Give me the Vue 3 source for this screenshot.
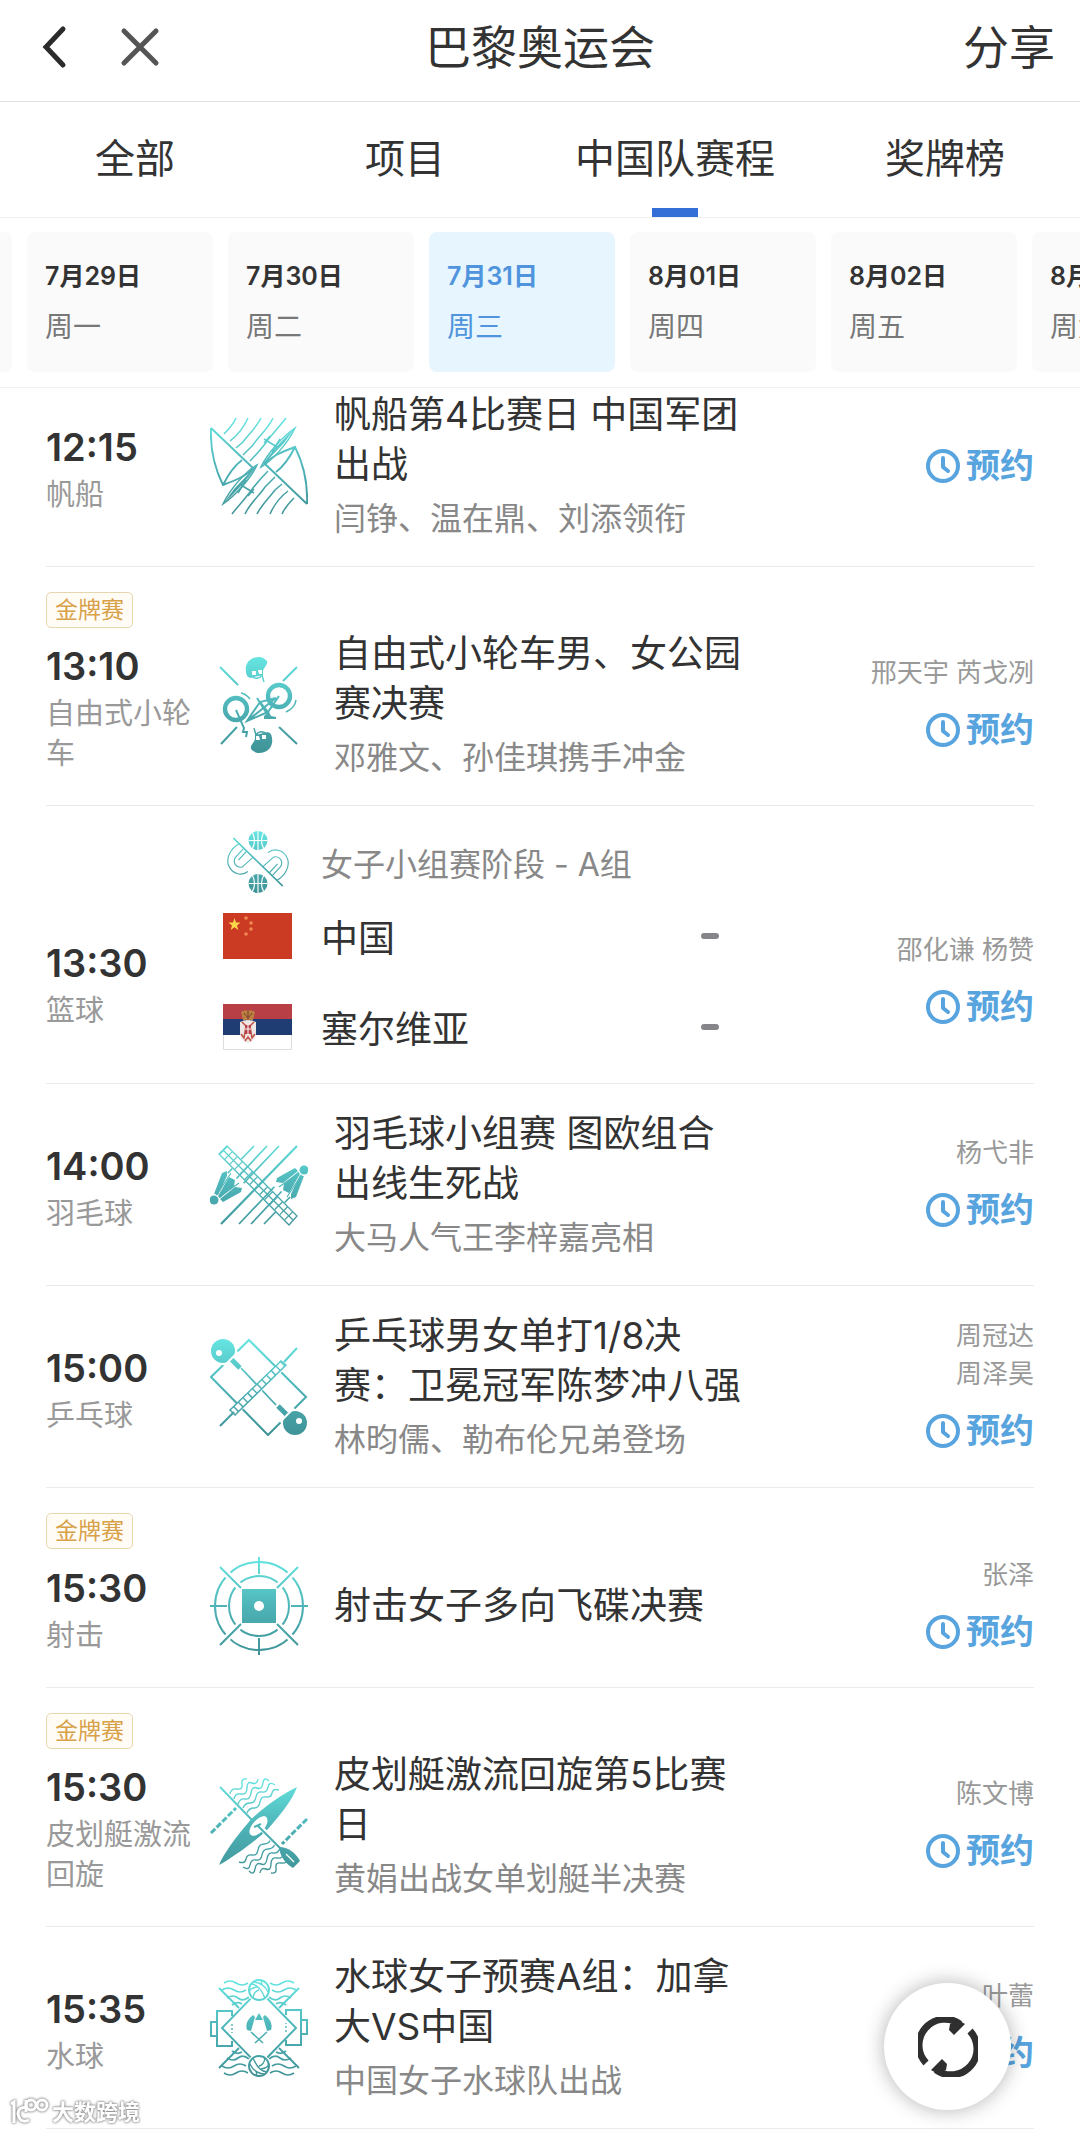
<script setup>
import { ref, onMounted } from "vue";

// 顶部标签
const tabs = ["全部", "项目", "中国队赛程", "奖牌榜"];
const activeTab = ref("中国队赛程");

// 日期
const days = [
  { date: "7月28日", week: "周日" },
  { date: "7月29日", week: "周一" },
  { date: "7月30日", week: "周二" },
  { date: "7月31日", week: "周三" },
  { date: "8月01日", week: "周四" },
  { date: "8月02日", week: "周五" },
  { date: "8月03日", week: "周六" },
];
const activeDay = ref("7月31日");
const dayBar = ref(null);
onMounted(() => {
  // 让选中的日期靠近中间
  dayBar.value.scrollLeft = 189;
});

// 赛程
const matches = ref([
  {
    time: "12:15",
    sport: "帆船",
    icon: "sail",
    title: "帆船第4比赛日 中国军团出战",
    sub: "闫铮、温在鼎、刘添领衔",
    hosts: [],
  },
  {
    gold: true,
    time: "13:10",
    sport: "自由式小轮车",
    icon: "bmx",
    title: "自由式小轮车男、女公园赛决赛",
    sub: "邓雅文、孙佳琪携手冲金",
    hosts: ["邢天宇 芮戈冽"],
  },
  {
    time: "13:30",
    sport: "篮球",
    icon: "basketball",
    stage: "女子小组赛阶段 - A组",
    teams: [
      { name: "中国", flag: "cn" },
      { name: "塞尔维亚", flag: "rs" },
    ],
    hosts: ["邵化谦 杨赞"],
  },
  {
    time: "14:00",
    sport: "羽毛球",
    icon: "badminton",
    title: "羽毛球小组赛 图欧组合出线生死战",
    sub: "大马人气王李梓嘉亮相",
    hosts: ["杨弋非"],
  },
  {
    time: "15:00",
    sport: "乒乓球",
    icon: "tabletennis",
    title: "乒乓球男女单打1/8决赛：卫冕冠军陈梦冲八强",
    sub: "林昀儒、勒布伦兄弟登场",
    hosts: ["周冠达", "周泽昊"],
  },
  {
    gold: true,
    time: "15:30",
    sport: "射击",
    icon: "shooting",
    title: "射击女子多向飞碟决赛",
    hosts: ["张泽"],
  },
  {
    gold: true,
    time: "15:30",
    sport: "皮划艇激流回旋",
    icon: "canoe",
    title: "皮划艇激流回旋第5比赛日",
    sub: "黄娟出战女单划艇半决赛",
    hosts: ["陈文博"],
  },
  {
    time: "15:35",
    sport: "水球",
    icon: "waterpolo",
    title: "水球女子预赛A组：加拿大VS中国",
    sub: "中国女子水球队出战",
    hosts: ["叶蕾"],
  },
]);

// 项目图标: w=线宽 fill=实心 cut=镂空 dash=虚线 t=变换
const turn = "rotate(180 49 49)";
const twice = (list) => [...list, ...list.map((s) => ({ ...s, t: turn }))];
const circle = (x, y, r) =>
  `M${x - r} ${y}a${r} ${r} 0 1 0 ${2 * r} 0a${r} ${r} 0 1 0 ${-2 * r} 0`;

const icons = {
  sail: twice([
    { d: "M26 1C23 8 19 12 14 17M38 1C34 10 28 18 20 24M51 1C46 11 38 18 33 25L26 31M63 1C58 12 48 20 43 28L33 38M76 1C70 9 62 17 55 27Q48 36 40 44", w: 1.5 },
    { d: "M1 11L44 52M1 11C0 34 5 52 13 68C26 63 36 59 43 52M13 68C19 56 24 49 32 43", w: 1.9 },
    { d: "M85 11C72 20 57 37 51 50C62 44 78 26 85 11Z", w: 1.5 },
    { d: "M85 11C72 23 60 36 51 50L74 26Z", fill: true },
    { d: "M54 22L67 30M60 19L54 26M62 35L70 22", w: 1.5 },
  ]),
  bmx: [
    { d: "M10 11L28 29M87 11L73 25M27 71L11 88M69 71L87 88", w: 2 },
    { d: circle(26, 53, 11), w: 4.4 },
    { d: circle(69, 40, 11), w: 4.4 },
    { d: "M31 37Q36 38 40 43M86 44Q85 52 76 56", w: 1.6 },
    { d: "M26 54L34 72L33 76L37 76L36 81M37 65L66 42L50 46L58 56L37 65L50 46M47 42L59 61M58 56L69 40", w: 2 },
    { d: "M54 60L59 56L61 60L66 61L66 63L54 63Z", fill: true },
    ...twice([
      { d: "M37 20C33 9 39 1 49 1C52 1 55 3 57 5C58 9 54 11 53 15L53 19L40 22Z", fill: true },
      { d: "M42 15h4v4h-4zM48 14h4v4h-3z", fill: true, cut: true },
      { d: "M41 20Q48 25 52 19L54 26", w: 1.4 },
    ]),
  ],
  basketball: twice([
    { d: "M10 11L88 87", w: 2 },
    { d: "M19 20C5 28 -1 42 2 53C7 68 23 72 33 64M26 28L13 42C9 50 14 59 24 57L42 41M31 32L18 46", w: 1.8 },
    { d: circle(49, 15, 15), fill: true },
    { d: "M49 0V30M34 15H64M40 2Q47 15 40 28M58 2Q51 15 58 28", w: 1.8, cut: true },
  ]),
  badminton: [
    ...twice([
      { d: "M44 10L17 38M57 10L26 43M69 10L32 49", w: 1.7 },
      { d: "M87 10L49 49", w: 2.2 },
    ]),
    { d: "M22 23L30 31M68 69L76 77", w: 13, cut: true },
    { d: "M17 10L87 80L79 89L9 18ZM13 14L83 84", w: 1.3 },
    { d: "M13 14L83 84", w: 11, dash: "1.3 5.8" },
    ...twice([
      { d: "M0 58L10 32L38 50L10 70Z", fill: true, cut: true },
      { d: "M4 58L12 37L17 35L17 40L8 59Z", fill: true },
      { d: "M8 60L19 41L25 44L24 50L10 62Z", fill: true },
      { d: "M10 63L25 51L32 52L31 56L13 66Z", fill: true },
      { d: "M6 60L21 37M8 62L29 47", w: 1.1 },
      { d: circle(4, 64, 4.5), fill: true },
      { d: "M4 58Q9 60 11 66", w: 1, cut: true },
    ]),
  ],
  tabletennis: [
    { d: "M39 2L96 59L58 97L1 39Z", w: 2.1 },
    { d: "M31 30L66 67", w: 1.8 },
    { d: "M74 26L24 74", w: 8, cut: true },
    { d: "M87 10L74 24M24 74L10 88", w: 2.1 },
    { d: "M71 23L20 72L25 77L76 27Z", w: 1.5 },
    { d: "M73 25L23 74", w: 7, dash: "1.5 5" },
    ...twice([
      { d: circle(13, 13, 14), fill: true, cut: true },
      { d: "M18 18L31 30", w: 8, cut: true },
      { d: circle(13, 13, 12), fill: true },
      { d: "M20 20L30 30", w: 5 },
      { d: "M14 28L28 14", w: 1.8, cut: true },
      { d: circle(9, 15, 3), fill: true, cut: true },
    ]),
  ],
  shooting: [
    { d: circle(49, 49, 44), w: 2 },
    { d: circle(49, 49, 30), w: 2 },
    { d: "M10 10L88 88M88 10L10 88", w: 7, cut: true },
    { d: "M10 10L31 31M88 10L67 31M10 88L31 67M88 88L67 67M49 0V17M49 81V98M0 49H17M81 49H98", w: 2 },
    { d: "M32 32H66V66H32Z", fill: true },
    { d: circle(49, 49, 5), fill: true, cut: true },
  ],
  canoe: [
    ...twice([
      { d: "M20 17q1 -6 7 -5t5 -5t5 -5M24 22q1 -6 7 -5t6 -6t5 -5t6 -4M28 27q2 -6 7 -5t6 -6t6 -5t6 -5t6 -2M33 31q2 -5 7 -5t6 -6t6 -5t6 -5t7 -2M37 36q2 -5 7 -5t6 -6t6 -5t6 -4t7 -3", w: 1.4 },
      { d: "M1 56L26 31", w: 3, dash: "6 2" },
    ]),
    { d: "M10 10L42 43", w: 1.9 },
    { d: "M87 10C70 18 46 36 38 46C26 60 14 76 9 88C24 80 48 62 58 52C70 38 82 24 87 10Z", fill: true },
    { d: "M40 57C37 52 46 40 54 39C60 40 58 50 50 56C46 59 42 60 40 57Z", fill: true, cut: true },
    { d: "M50 50L69 69", w: 5, cut: true },
    { d: "M47 48L72 73M44 50L51 47", w: 2 },
    { d: "M69 70C78 70 86 76 90 84L83 91C76 87 70 80 69 70Z", fill: true },
    { d: "M76 77L84 85", w: 1.2, cut: true },
  ],
  waterpolo: [
    { d: "M49 11L86 49L49 87L12 49Z", w: 2 },
    ...twice([
      { d: "M9 9L29 29M89 9L69 29", w: 1.9 },
      { d: "M14 4q6 -4 12 0t12 0M12 11q6 -4 12 0t12 0M17 19q6 -4 11 0t11 -1M22 26q5 -4 10 -1M84 4q-6 -4 -12 0t-12 0M86 11q-6 -4 -12 0t-12 0M81 19q-6 -4 -11 0t-11 -1M76 26q-5 -4 -10 -1", w: 1.7 },
      { d: circle(49, 11, 12), fill: true, cut: true },
      { d: circle(49, 11, 10), w: 1.9 },
      { d: "M41 5Q49 5 55 19M44 3Q54 4 58 13M49 11Q44 12 43 19M47 8Q40 9 39 13M52 1Q51 4 52 6", w: 1.4 },
      { d: "M22 37V32H7V67H22V62M7 43H1V57H7", w: 2 },
      { d: "M22 45V54", w: 1.4, dash: "2 2" },
    ]),
    { d: "M49 34L53 41H45ZM43 36L45 38L41 52L37 51C35 45 38 40 43 36ZM55 36L53 38L57 52L61 51C63 45 60 40 55 36Z", fill: true },
    { d: "M41 53L53 64M57 53L45 64", w: 1.6 },
  ],
};
</script>

<template>
  <div class="page">
    <header class="header">
      <div class="nav">
        <button class="icon-btn" aria-label="返回">
          <svg width="28" height="44" viewBox="0 0 28 44">
            <path d="M23 4L6 22L23 40" fill="none" stroke="#2b2b2b" stroke-width="5" stroke-linecap="round" />
          </svg>
        </button>
        <button class="icon-btn" aria-label="关闭">
          <svg width="40" height="40" viewBox="0 0 40 40">
            <path d="M4 4L36 36M36 4L4 36" fill="none" stroke="#555" stroke-width="5" stroke-linecap="round" />
          </svg>
        </button>
      </div>
      <h1>巴黎奥运会</h1>
      <button class="share">分享</button>
    </header>

    <nav class="tabs">
      <button
        v-for="tab in tabs"
        :key="tab"
        :class="{ active: tab === activeTab }"
        @click="activeTab = tab">
        {{ tab }}
      </button>
    </nav>

    <div ref="dayBar" class="days">
      <button
        v-for="day in days"
        :key="day.date"
        class="day"
        :class="{ selected: day.date === activeDay }"
        @click="activeDay = day.date">
        <span class="date">{{ day.date }}</span>
        <span class="week">{{ day.week }}</span>
      </button>
    </div>

    <!-- 图标共用的渐变 -->
    <svg class="defs" width="0" height="0" aria-hidden="true">
      <linearGradient id="teal" x1="0" y1="0" x2="0" y2="1">
        <stop offset="0" stop-color="#66e6e2" />
        <stop offset="0.5" stop-color="#4eb4b8" />
        <stop offset="1" stop-color="#3f9296" />
      </linearGradient>
    </svg>

    <ul class="list">
      <li v-for="m in matches" :key="m.icon" class="match">
        <span v-if="m.gold" class="gold">金牌赛</span>
        <div v-if="m.stage" class="stage">
          <svg width="62" height="62" viewBox="0 0 98 98">
            <mask :id="'mask-' + m.icon">
              <path
                v-for="(s, i) in icons[m.icon]"
                :key="i"
                :d="s.d"
                :transform="s.t"
                :fill="s.fill ? (s.cut ? '#000' : '#fff') : 'none'"
                :stroke="s.fill ? 'none' : s.cut ? '#000' : '#fff'"
                :stroke-width="s.w" />
            </mask>
            <rect width="98" height="98" fill="url(#teal)" :mask="`url(#mask-${m.icon})`" />
          </svg>
          <span>{{ m.stage }}</span>
        </div>

        <div class="row" :class="{ versus: m.teams }">
          <div class="when">
            <time>{{ m.time }}</time>
            <p>{{ m.sport }}</p>
          </div>

          <div v-if="m.teams" class="teams">
            <div v-for="team in m.teams" :key="team.name" class="team">
              <svg v-if="team.flag === 'cn'" width="69" height="46" viewBox="0 0 69 46">
                <rect width="69" height="46" fill="#cb3a22" />
                <path d="M11.5 5L13 9.6H17.5L14 12.5L15.3 17L11.5 14.3L7.7 17L9 12.5L5.500 9.600H10Z" fill="#fbd84b" />
                <g fill="#f08a52">
                  <circle cx="23" cy="5" r="1.800" />
                  <circle cx="28" cy="10" r="1.800" />
                  <circle cx="28" cy="16" r="1.800" />
                  <circle cx="23" cy="21" r="1.800" />
                </g>
              </svg>
              <svg v-else width="69" height="46" viewBox="0 0 69 46">
                <rect width="69" height="46" fill="#fff" />
                <rect width="69" height="16" fill="#b83f45" />
                <rect y="15" width="69" height="16" fill="#1f3d73" />
                <path d="M0.500 31V45.500H68.500V31" fill="none" stroke="#ddd" />
                <path d="M18 8Q25 4 32 8L30 16H20Z" fill="#b9803f" />
                <path d="M21 9L25 14L29 9M25 6V16" fill="none" stroke="#7c3b32" />
                <path d="M17 18Q25 14 33 18V31Q32 37 25 39Q18 37 17 31Z" fill="#eee6e4" />
                <path d="M19 18L23 22L21 34L18 30M31 18L27 22L29 34L32 30M22 37L25 33L28 37" fill="none" stroke="#bd5146" stroke-width="1.500" />
                <rect x="22" y="21" width="6" height="9" fill="#b83f45" />
                <path d="M25 21V30M22 25H28" stroke="#fff" />
              </svg>
              <span class="team-name">{{ team.name }}</span>
              <span class="score" aria-label="未开始"></span>
            </div>
          </div>

          <template v-else>
            <svg class="sport-icon" width="98" height="98" viewBox="0 0 98 98">
              <mask :id="'mask-' + m.icon">
                <path
                  v-for="(s, i) in icons[m.icon]"
                  :key="i"
                  :d="s.d"
                  :transform="s.t"
                  :fill="s.fill ? (s.cut ? '#000' : '#fff') : 'none'"
                  :stroke="s.fill ? 'none' : s.cut ? '#000' : '#fff'"
                  :stroke-dasharray="s.dash"
                  :stroke-width="s.w" />
              </mask>
              <rect width="98" height="98" fill="url(#teal)" :mask="`url(#mask-${m.icon})`" />
            </svg>
            <div class="info">
              <h2>{{ m.title }}</h2>
              <p v-if="m.sub">{{ m.sub }}</p>
            </div>
          </template>

          <div class="side">
            <p v-if="m.hosts.length" class="hosts">
              <span v-for="host in m.hosts" :key="host">{{ host }}</span>
            </p>
            <button class="book" @click="m.booked = !m.booked">
              <svg width="34" height="34" viewBox="0 0 34 34" fill="none" stroke="currentColor" stroke-width="4">
                <circle cx="17" cy="17" r="15" />
                <path d="M17 9V18L22 22" stroke-linecap="round" stroke-linejoin="round" />
              </svg>
              {{ m.booked ? "已约" : "预约" }}
            </button>
          </div>
        </div>
      </li>
    </ul>

    <!-- 刷新按钮 -->
    <button class="refresh" aria-label="刷新">
      <svg width="60" height="60" viewBox="0 0 60 60" fill="none" stroke="#2f2f2f" stroke-width="7">
        <path d="M8 46A26 26 0 0 1 42 7" />
        <path d="M52 14A26 26 0 0 1 18 53" />
        <path d="M31 13L36 18L47 7L40 3L32 7Z" fill="#2f2f2f" stroke="none" />
        <path d="M29 47L24 42L13 53L20 57L28 53Z" fill="#2f2f2f" stroke="none" />
      </svg>
    </button>

    <!-- 水印 -->
    <div class="watermark">
      <svg width="40" height="28" viewBox="0 0 40 28" fill="none" stroke="#fff" stroke-width="3">
        <path d="M2 6L5 4V25M19 10Q9 8 9 16Q11 26 20 22" />
        <circle cx="22" cy="7" r="5" />
        <circle cx="33" cy="7" r="5" />
        <path d="M17 2V14" />
      </svg>
      <span>大数跨境</span>
    </div>
  </div>
</template>

<style>
body {
  background-color: #fff;
}
</style>

<style scoped>
.page {
  position: relative;
  color: #333;
  font-family: Inter, "Noto Sans CJK SC", sans-serif;
}
button {
  padding: 0;
  border: none;
  background: none;
  color: inherit;
  font-family: inherit;
  cursor: pointer;
}
h1,
h2,
p,
ul {
  margin: 0;
  padding: 0;
  font-weight: normal;
}
svg {
  display: block;
  flex-shrink: 0;
}
.defs {
  position: absolute;
}

/* 标题栏 */
.header {
  display: grid;
  grid-template-columns: 1fr auto 1fr;
  align-items: center;
  height: 94px;
  padding: 0 25px 7px;
  border-bottom: 1px solid #e2e2e2;
}
.nav {
  display: flex;
  align-items: center;
  gap: 52px;
  padding-left: 15px;
}
.header h1,
.share {
  font-size: 46px;
  line-height: 60px;
}
.share {
  justify-self: end;
}

/* 标签 */
.tabs {
  display: grid;
  grid-template-columns: repeat(4, 1fr);
  height: 115px;
  border-bottom: 1px solid #f0f0f0;
}
.tabs button {
  position: relative;
  padding-bottom: 8px;
  font-size: 40px;
}
.tabs .active::after {
  content: "";
  position: absolute;
  left: 50%;
  bottom: 0;
  width: 46px;
  height: 9px;
  margin-left: -23px;
  background-color: #336fd6;
}

/* 日期 */
.days {
  display: flex;
  gap: 15px;
  padding: 14px 15px 15px;
  border-bottom: 1px solid #f3f3f3;
  overflow-x: auto;
  scrollbar-width: none;
}
.day {
  display: flex;
  flex: 0 0 186px;
  flex-direction: column;
  gap: 11px;
  padding: 24px 18px 25px;
  box-sizing: border-box;
  border-radius: 8px;
  background-color: #fafafa;
  text-align: left;
  line-height: 40px;
}
.date {
  font-size: 25px;
  font-weight: 600;
}
.week {
  color: #777;
  font-size: 28px;
}
.selected {
  background-color: #e7f5fe;
}
.selected .date,
.selected .week {
  color: #4f94dc;
}

/* 赛程列表 */
.list {
  list-style: none;
}
.match {
  margin: 0 46px;
  padding: 25px 0;
  border-bottom: 1px solid #ebebeb;
}
.match:first-child {
  padding-top: 2px;
}
.gold {
  display: block;
  width: fit-content;
  margin-bottom: 1px;
  padding: 0 8px;
  border: 1px solid #e8d6ae;
  border-radius: 5px;
  background-color: #fffcf6;
  color: #d8a047;
  font-size: 23px;
  line-height: 34px;
}
.stage {
  display: flex;
  align-items: center;
  gap: 32px;
  height: 62px;
  margin-bottom: 11px;
  padding-left: 181px;
  color: #888;
  font-size: 32px;
}
.row {
  display: grid;
  grid-template-columns: 164px 124px minmax(0, 416px) 1fr;
  align-items: center;
  min-height: 112px;
}
.versus {
  grid-template-columns: 150px minmax(0, 554px) 1fr;
  min-height: 154px;
}
.when {
  padding-top: 6px;
}
.row:not(.versus) .when {
  padding-right: 14px;
}
.when time {
  display: block;
  margin-bottom: 3px;
  font-size: 38px;
  font-weight: 600;
  line-height: 50px;
}
.when p {
  color: #999;
  font-size: 29px;
  line-height: 40px;
}
.info h2 {
  font-size: 37px;
  line-height: 50px;
}
.info p {
  margin-top: 7px;
  color: #888;
  font-size: 32px;
  line-height: 44px;
}
.teams {
  display: grid;
  gap: 45px;
  padding: 0 31px 0 27px;
}
.team {
  display: flex;
  align-items: center;
  gap: 29px;
  height: 46px;
}
.team-name {
  flex: 1;
  font-size: 37px;
}
.score {
  width: 18px;
  height: 6px;
  border-radius: 3px;
  background-color: #85858a;
}
.side {
  display: flex;
  flex-direction: column;
  align-items: flex-end;
  gap: 13px;
}
.hosts {
  color: #999;
  font-size: 26px;
  line-height: 38px;
  text-align: right;
}
.hosts span {
  display: block;
}
.book {
  display: flex;
  align-items: center;
  gap: 6px;
  color: #58a4de;
  font-size: 34px;
  font-weight: 600;
  line-height: 50px;
}

/* 悬浮 */
.refresh {
  position: fixed;
  right: 69px;
  bottom: 22px;
  display: flex;
  align-items: center;
  justify-content: center;
  width: 127px;
  height: 127px;
  border-radius: 50%;
  background-color: #fff;
  box-shadow: 0 0 20px rgba(0, 0, 0, 0.3);
}
.watermark {
  position: fixed;
  left: 9px;
  bottom: 4px;
  display: flex;
  align-items: center;
  gap: 3px;
  color: #fff;
  font-size: 22px;
  font-weight: 600;
  line-height: 32px;
  filter: drop-shadow(0 0 1px #888) drop-shadow(0 0 1px #aaa);
}
</style>
